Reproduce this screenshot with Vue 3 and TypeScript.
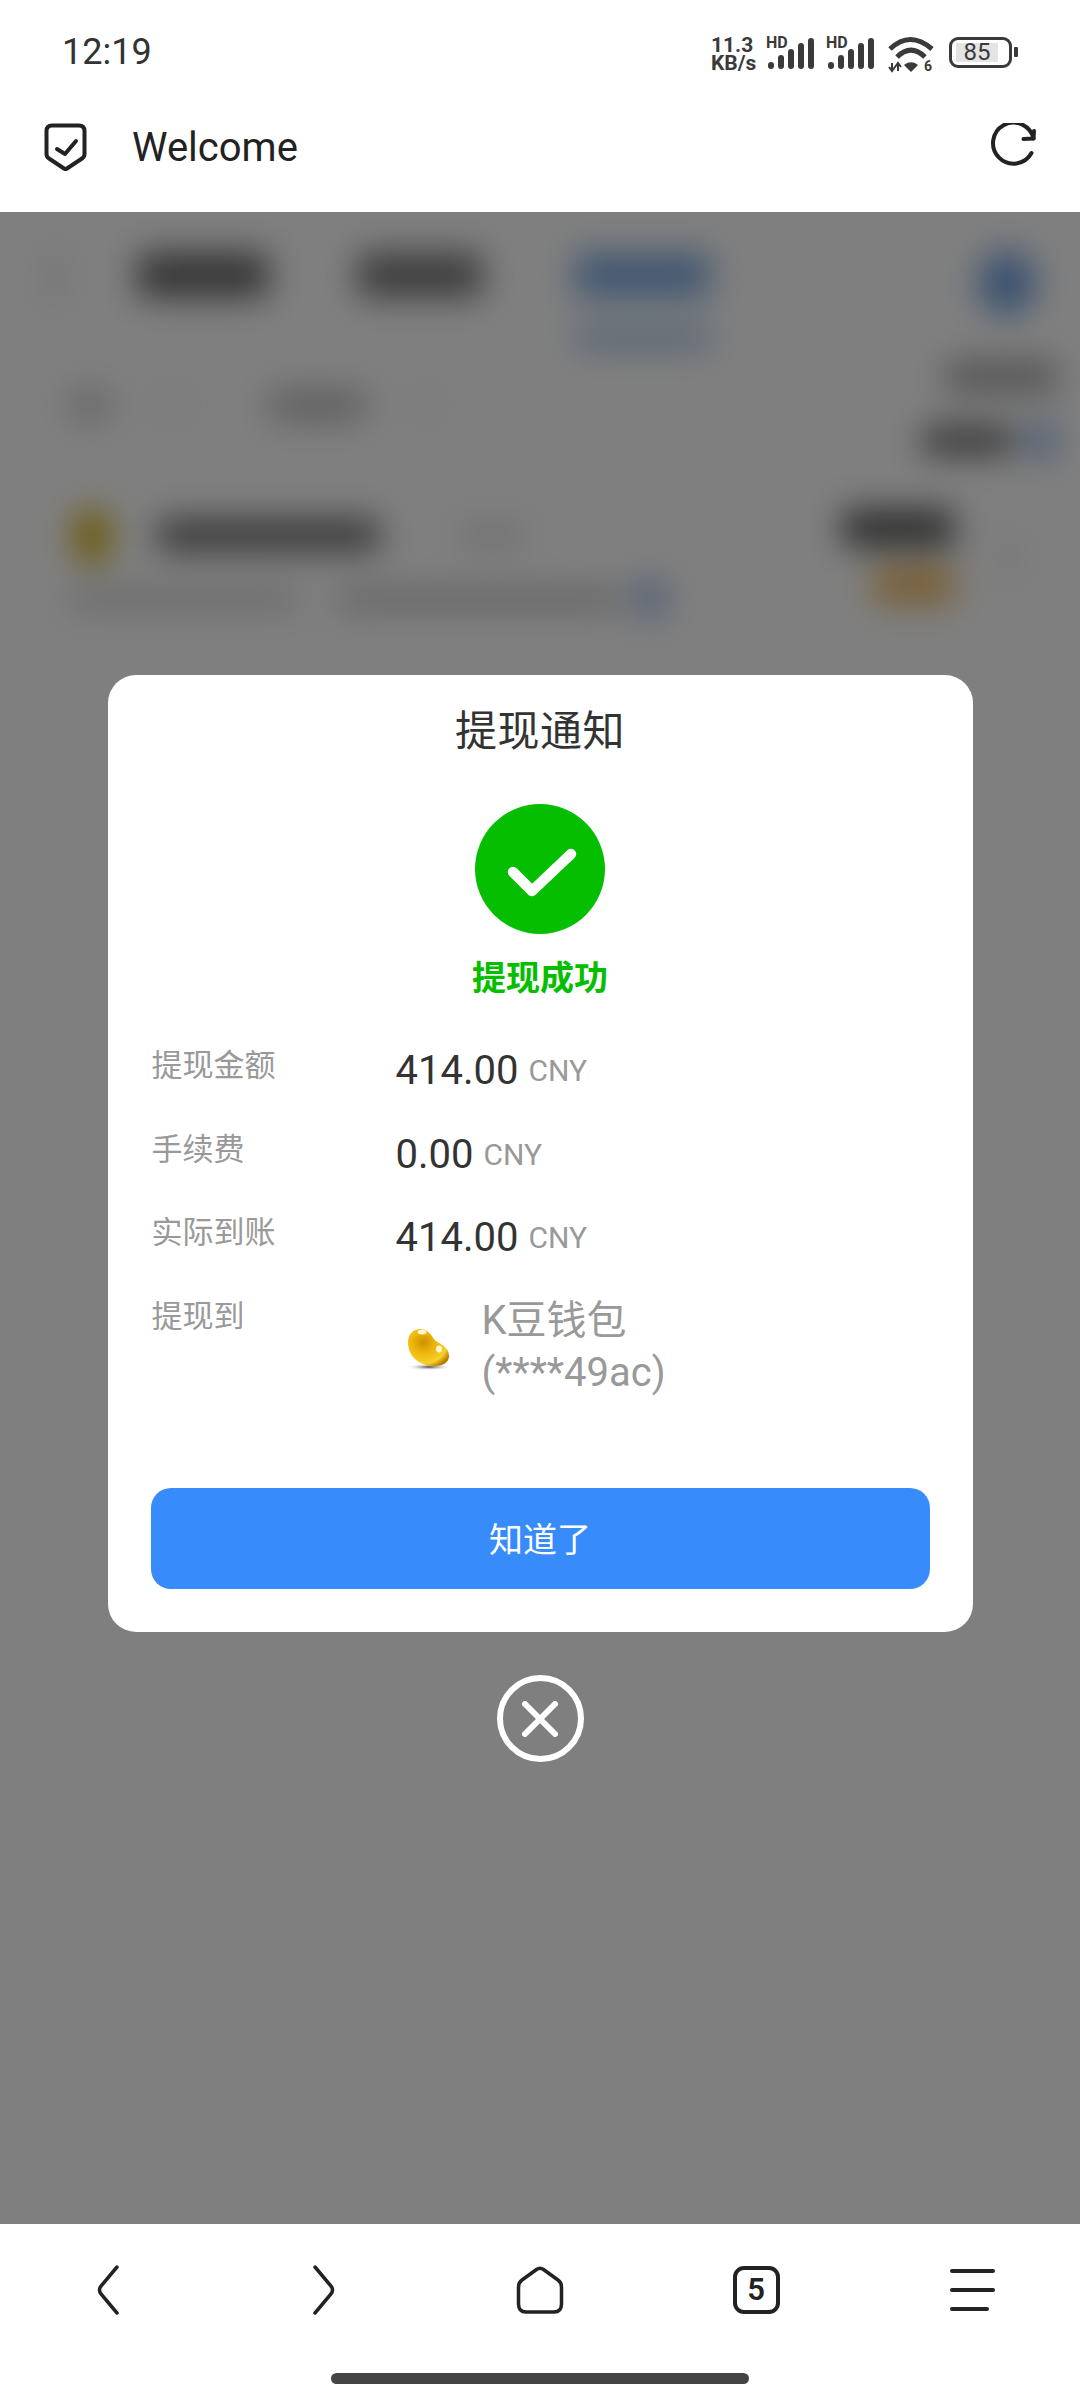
<template>
  <div class="page">
    <div class="status-bar">
      <span class="time">12:19</span>
      <div class="status-icons">
        <span class="net-speed">11.3<br />KB/s</span>
        <div v-for="n in 2" :key="n" class="signal">
          <span class="hd">HD</span>
          <svg width="46" height="31" viewBox="0 0 46 31">
            <rect v-for="bar in signalBars" :key="bar.x" :x="bar.x" :y="31 - bar.h" width="6" :height="bar.h" rx="3" fill="#3a3a3a" />
          </svg>
        </div>
        <svg class="wifi" width="46" height="37" viewBox="0 0 46 37">
          <g fill="none" stroke="#3a3a3a" stroke-width="5">
            <path d="M2 13Q22 -6 44 13" />
            <path d="M9 21Q23 7 37 21" />
          </g>
          <path d="M17 29Q23 25 29 29L23 35Z" fill="#3a3a3a" stroke="#3a3a3a" stroke-width="1.500" stroke-linejoin="round" />
          <path d="M4 27v8M1 31l3 4 3-4M10 35v-8M7 31l3-4 3 4" fill="none" stroke="#3a3a3a" stroke-width="2" />
          <text x="36" y="35" class="wifi-six">6</text>
        </svg>
        <div class="battery">
          <div class="battery-body">
            <span class="battery-level">85</span>
          </div>
          <span class="battery-nub"></span>
        </div>
      </div>
    </div>

    <header class="top-bar">
      <div class="top-left">
        <svg width="44" height="49" viewBox="0 0 44 49">
          <path d="M2.500 8Q2.500 2.500 8 2.500H35Q40.500 2.500 40.500 8V31Q40.500 34 38 35.500L23 45.500Q21.500 46.500 20 45.500L5 35.500Q2.500 34 2.500 31Z" fill="none" stroke="#222" stroke-width="4" stroke-linejoin="round" />
          <path d="M13 26l8 5 11-13" fill="none" stroke="#222" stroke-width="4" stroke-linecap="round" stroke-linejoin="round" />
        </svg>
        <span class="welcome">Welcome</span>
      </div>
      <svg width="49" height="49" viewBox="0 0 49 49">
        <path d="M43.500 30A20.500 20.500 0 1 1 45.500 15.500" fill="none" stroke="#222" stroke-width="4" stroke-linecap="round" />
        <path d="M46 8L45.500 15.500 35.500 16" fill="none" stroke="#222" stroke-width="4" stroke-linecap="round" stroke-linejoin="round" />
      </svg>
    </header>

    <main class="content">
      <div class="backdrop">
        <div class="bd-tabs">
          <i class="bd-menu"></i>
          <i class="bd-tab dark"></i>
          <i class="bd-tab dark short"></i>
          <div class="bd-active">
            <i class="bd-tab blue"></i>
            <i class="bd-line"></i>
          </div>
          <i class="bd-avatar"></i>
        </div>
        <div class="bd-filters">
          <div class="bd-chips">
            <i class="chip a"></i>
            <i class="chip b"></i>
            <i class="chip c"></i>
            <i class="chip d"></i>
          </div>
          <div class="bd-side">
            <i class="side-top"></i>
            <div class="side-row">
              <i class="side-dark"></i>
              <i class="side-blue"></i>
            </div>
          </div>
        </div>
        <div class="bd-card">
          <div class="card-main">
            <div class="card-title">
              <i class="card-icon"></i>
              <i class="card-name"></i>
              <i class="card-extra"></i>
            </div>
            <div class="card-desc">
              <i class="desc-a"></i>
              <i class="desc-b"></i>
              <i class="desc-c"></i>
            </div>
          </div>
          <div class="card-amount">
            <i class="amount-value"></i>
            <i class="amount-tag"></i>
          </div>
          <i class="card-arrow"></i>
        </div>
      </div>

      <div class="overlay">
        <div class="modal">
          <h2 class="modal-title">提现通知</h2>
          <svg class="success-icon" width="130" height="130" viewBox="0 0 130 130">
            <circle cx="65" cy="65" r="65" fill="#06be00" />
            <path d="M38 68l19 19 39-37" fill="none" stroke="#fff" stroke-width="10.500" stroke-linecap="round" stroke-linejoin="round" />
          </svg>
          <p class="success-text">提现成功</p>

          <div class="rows">
            <div v-for="row in rows" :key="row.label" class="row">
              <span class="row-label">{{ row.label }}</span>
              <span class="row-value">{{ row.value }}</span>
              <span class="row-unit">CNY</span>
            </div>
            <div class="row">
              <span class="row-label">提现到</span>
              <div class="wallet">
                <svg class="bean" width="46" height="44" viewBox="0 0 46 44">
                  <defs>
                    <radialGradient id="beanFill" cx="0.38" cy="0.36" r="0.72">
                      <stop offset="0" stop-color="#cf9000" />
                      <stop offset="0.4" stop-color="#eeb60c" />
                      <stop offset="0.8" stop-color="#f7d02c" />
                      <stop offset="1" stop-color="#b97c00" />
                    </radialGradient>
                    <radialGradient id="beanShadow">
                      <stop offset="0" stop-color="#444" />
                      <stop offset="1" stop-color="#fff" stop-opacity="0" />
                    </radialGradient>
                  </defs>
                  <ellipse cx="23" cy="39" rx="23" ry="3.500" fill="url(#beanShadow)" />
                  <path d="M14 1C21 1 25 6 28 11C30 15 43 17 43 28C43 35 36 38 29 38C15 38 2 30 2 14C2 6 8 1 14 1Z" fill="url(#beanFill)" />
                  <ellipse cx="16" cy="4" rx="4.500" ry="2.500" fill="#fff6cf" />
                  <ellipse cx="33" cy="21" rx="3" ry="3.500" fill="#fff6cf" />
                </svg>
                <div class="wallet-name">
                  <div>K豆钱包</div>
                  <div>(****49ac)</div>
                </div>
              </div>
            </div>
          </div>

          <button class="confirm-btn">知道了</button>
        </div>

        <button class="close-btn">
          <svg width="36" height="36" viewBox="0 0 36 36">
            <path d="M3 3l30 30M33 3L3 33" fill="none" stroke="#fff" stroke-width="6" stroke-linecap="round" />
          </svg>
        </button>
      </div>
    </main>

    <nav class="bottom-nav">
      <div class="nav-icons">
        <svg width="24" height="50" viewBox="0 0 24 50">
          <path d="M21 2L5 21Q2 25 5 29L21 48" fill="none" stroke="#222" stroke-width="3.500" stroke-linecap="round" />
        </svg>
        <svg width="24" height="50" viewBox="0 0 24 50">
          <path d="M3 2L19 21Q22 25 19 29L3 48" fill="none" stroke="#222" stroke-width="3.500" stroke-linecap="round" />
        </svg>
        <svg width="48" height="50" viewBox="0 0 48 50">
          <path d="M20.500 4.500Q24 2 27.500 4.500L42 15Q45.500 17.500 45.500 22V39Q45.500 47 38 47H10Q2.500 47 2.500 39V22Q2.500 17.500 6 15Z" fill="none" stroke="#222" stroke-width="3.500" stroke-linejoin="round" />
        </svg>
        <div class="tab-count">5</div>
        <div class="menu-lines">
          <i></i>
          <i></i>
          <i class="short"></i>
        </div>
      </div>
      <div class="home-bar"></div>
    </nav>
  </div>
</template>

<script setup lang="ts">
interface AmountRow {
  label: string
  value: string
}

const signalBars = [
  { x: 0, h: 7 },
  { x: 10, h: 14 },
  { x: 20, h: 20 },
  { x: 30, h: 26 },
  { x: 40, h: 31 }
]

const rows: AmountRow[] = [
  { label: '提现金额', value: '414.00' },
  { label: '手续费', value: '0.00' },
  { label: '实际到账', value: '414.00' }
]
</script>

<style>
html,
body {
  margin: 0;
  background: #fff;
}
</style>

<style scoped>
.page {
  width: 1080px;
  height: 2400px;
  display: flex;
  flex-direction: column;
  background: #fff;
  font-family: Roboto, "Noto Sans CJK SC", sans-serif;
  color: #222;
  overflow: hidden;
}

.status-bar {
  height: 105px;
  box-sizing: border-box;
  padding: 30px 62px 0;
  display: flex;
  justify-content: space-between;
  align-items: flex-start;
  color: #3a3a3a;
}

.time {
  font-size: 36px;
  line-height: 44px;
  color: #333;
}

.status-icons {
  display: flex;
  align-items: flex-start;
  margin-top: 6px;
}

.net-speed {
  width: 50px;
  margin-right: 7px;
  font-size: 21px;
  line-height: 18px;
  font-weight: 700;
  color: #3a3a3a;
}

.signal {
  position: relative;
  width: 46px;
  height: 33px;
  margin-right: 14px;
  padding-top: 2px;
}

.signal svg {
  display: block;
}

.hd {
  position: absolute;
  left: -2px;
  top: 0;
  font-size: 16px;
  line-height: 13px;
  font-weight: 700;
}

.wifi {
  margin-right: 15px;
}

.wifi-six {
  font-family: Roboto, sans-serif;
  font-size: 14px;
  font-weight: 700;
  fill: #3a3a3a;
}

.battery {
  display: flex;
  align-items: center;
  height: 32px;
}

.battery-body {
  width: 63px;
  height: 31px;
  box-sizing: border-box;
  border: 3px solid #3a3a3a;
  border-radius: 9px;
  padding: 3px 11px 3px 4px;
  display: flex;
}

.battery-level {
  flex: 1;
  background: #e4e4e4;
  font-size: 24px;
  line-height: 19px;
  text-align: center;
  color: #3a3a3a;
}

.battery-nub {
  width: 4px;
  height: 10px;
  margin-left: 2px;
  border-radius: 1px;
  background: #3a3a3a;
}

.top-bar {
  height: 107px;
  box-sizing: border-box;
  padding: 0 43px 22px 44px;
  display: flex;
  justify-content: space-between;
  align-items: center;
}

.top-left {
  display: flex;
  align-items: center;
  gap: 44px;
}

.welcome {
  font-size: 40px;
  color: #222;
}

.content {
  position: relative;
  flex: 1;
  overflow: hidden;
  background: #fff;
}

.backdrop {
  filter: blur(17px);
}

.backdrop i {
  display: block;
}

.bd-tabs {
  display: flex;
  align-items: flex-start;
  height: 148px;
  padding: 38px 44px 0 48px;
  box-sizing: border-box;
}

.bd-menu {
  width: 14px;
  height: 46px;
  margin: 4px 76px 0 0;
  background: #ddd;
}

.bd-tab {
  width: 130px;
  height: 44px;
  margin-top: 3px;
}

.bd-tab.dark {
  background: #666;
  margin-right: 90px;
}

.bd-tab.short {
  width: 124px;
  background: #777;
}

.bd-tab.blue {
  width: 135px;
  background: #80abe0;
}

.bd-active {
  margin-left: 3px;
}

.bd-line {
  height: 22px;
  margin-top: 30px;
  background: #aac6ec;
}

.bd-avatar {
  width: 58px;
  height: 66px;
  margin-left: auto;
  border-radius: 50%;
  background: #74a2e0;
}

.bd-filters {
  display: flex;
  justify-content: space-between;
  padding: 0 23px 0 69px;
  height: 117px;
}

.bd-chips {
  display: flex;
  gap: 50px;
  margin-top: 30px;
  height: 30px;
}

.chip.a {
  width: 41px;
  background: #ccc;
}

.chip.b {
  width: 26px;
  background: #f0f0f0;
}

.chip.c {
  width: 96px;
  margin-left: 33px;
  background: #bbb;
}

.chip.d {
  width: 27px;
  background: #f4f4f4;
  margin-left: -2px;
}

.bd-side {
  display: flex;
  flex-direction: column;
  align-items: flex-end;
  gap: 30px;
}

.side-top {
  width: 111px;
  height: 33px;
  background: #aaa;
}

.side-row {
  display: flex;
  align-items: center;
  gap: 14px;
}

.side-dark {
  width: 89px;
  height: 27px;
  background: #666;
}

.side-blue {
  width: 31px;
  height: 35px;
  background: #9dbcea;
}

.bd-card {
  display: flex;
  margin: 0 24px;
  padding: 30px 40px 0 45px;
  height: 180px;
  box-sizing: border-box;
  border: 1px solid #f2f2f2;
  border-radius: 16px;
}

.card-main {
  flex: 1;
}

.card-title {
  display: flex;
  align-items: flex-start;
}

.card-icon {
  width: 36px;
  height: 57px;
  margin: 0 48px 0 4px;
  background: #d0aa00;
  border-radius: 50%;
}

.card-name {
  width: 221px;
  height: 30px;
  margin-top: 12px;
  background: #666;
}

.card-extra {
  width: 62px;
  height: 22px;
  margin: 16px 0 0 82px;
  background: #ddd;
}

.card-desc {
  display: flex;
  align-items: center;
  margin-top: 15px;
}

.desc-a {
  width: 227px;
  height: 18px;
  background: #ccc;
}

.desc-b {
  width: 283px;
  height: 18px;
  margin-left: 41px;
  background: #bbb;
}

.desc-c {
  width: 31px;
  height: 37px;
  margin-left: 14px;
  background: #a4bfea;
}

.card-amount {
  display: flex;
  flex-direction: column;
  align-items: flex-end;
  gap: 20px;
  margin-top: 2px;
}

.amount-value {
  width: 111px;
  height: 36px;
  background: #555;
}

.amount-tag {
  width: 80px;
  height: 38px;
  background: #f0bc66;
}

.card-arrow {
  width: 13px;
  height: 34px;
  margin: 32px 0 0 48px;
  background: #ddd;
}

.overlay {
  position: absolute;
  inset: 0;
  background: rgba(0, 0, 0, 0.503);
  display: flex;
  flex-direction: column;
  align-items: center;
  padding-top: 463px;
  box-sizing: border-box;
}

.modal {
  width: 865px;
  height: 957px;
  box-sizing: border-box;
  padding: 31px 43px 43px;
  background: #fff;
  border-radius: 28px;
  display: flex;
  flex-direction: column;
  align-items: center;
}

.modal-title {
  margin: 0;
  font-size: 42px;
  line-height: 52px;
  font-weight: 400;
  letter-spacing: 0.5px;
  color: #333;
}

.success-icon {
  display: block;
  margin-top: 46px;
  flex: none;
}

.success-text {
  margin: 22px 0 0;
  font-size: 34px;
  line-height: 44px;
  font-weight: 700;
  color: #06be00;
}

.rows {
  align-self: stretch;
  margin-top: 44px;
  display: flex;
  flex-direction: column;
  gap: 29.5px;
}

.row {
  display: flex;
  align-items: flex-start;
  min-height: 54px;
}

.row-label {
  width: 245px;
  flex: none;
  padding-left: 1px;
  box-sizing: border-box;
  font-size: 31px;
  line-height: 44px;
  color: #999;
}

.row-value {
  font-size: 40px;
  line-height: 54px;
  color: #333;
}

.row-unit {
  margin-left: 10px;
  font-size: 30px;
  line-height: 54px;
  color: #999;
}

.wallet {
  display: flex;
  align-items: center;
}

.bean {
  margin-left: 10px;
  margin-top: 7px;
  flex: none;
}

.wallet-name {
  margin-left: 30px;
  font-size: 40px;
  line-height: 52px;
  color: #999;
}

.confirm-btn {
  margin-top: auto;
  width: 100%;
  height: 101px;
  flex: none;
  border: none;
  border-radius: 20px;
  background: #378bfa;
  color: #fff;
  font-family: inherit;
  font-size: 34px;
  padding-bottom: 3px;
}

.close-btn {
  width: 87px;
  height: 87px;
  margin-top: 43px;
  padding: 0;
  box-sizing: border-box;
  border: 6px solid #fff;
  border-radius: 50%;
  background: transparent;
  display: flex;
  align-items: center;
  justify-content: center;
}

.bottom-nav {
  height: 176px;
  background: #fff;
  display: flex;
  flex-direction: column;
  align-items: center;
}

.nav-icons {
  width: 100%;
  margin-top: 41px;
  display: grid;
  grid-template-columns: repeat(5, 1fr);
  justify-items: center;
  align-items: center;
}

.tab-count {
  width: 47px;
  height: 48px;
  box-sizing: border-box;
  border: 4px solid #222;
  border-radius: 11px;
  font-size: 31px;
  font-weight: 600;
  line-height: 40px;
  text-align: center;
}

.menu-lines {
  width: 45px;
  height: 42px;
  display: flex;
  flex-direction: column;
  justify-content: space-between;
}

.menu-lines i {
  display: block;
  height: 4px;
  border-radius: 2px;
  background: #222;
}

.menu-lines .short {
  width: 39px;
}

.home-bar {
  width: 418px;
  height: 11px;
  margin-top: 58px;
  border-radius: 6px;
  background: #444;
}
</style>
